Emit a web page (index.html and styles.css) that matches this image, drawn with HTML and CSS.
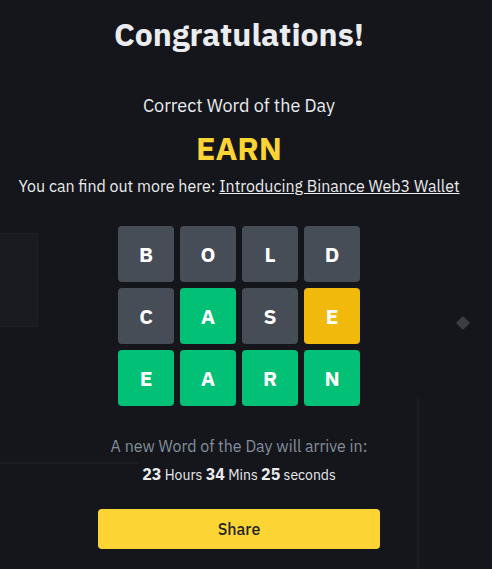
FILE: index.html
```html
<!DOCTYPE html>
<html lang="en">
<head>
<meta charset="utf-8">
<title>Congratulations</title>
<link rel="stylesheet" href="styles.css">
</head>
<body>
<div class="backdrop">
  <div class="deco deco-box"></div>
  <div class="deco deco-hline"></div>
  <div class="deco deco-vline"></div>
  <div class="deco deco-diamond"></div>
</div>
<main class="result">
  <h1 class="title">Congratulations!</h1>
  <p class="label">Correct Word of the Day</p>
  <p class="word">EARN</p>
  <p class="more">You can find out more here: <a class="more-link" href="#">Introducing Binance Web3 Wallet</a></p>
  <div class="board">
    <div class="tile tile-absent">B</div>
    <div class="tile tile-absent">O</div>
    <div class="tile tile-absent">L</div>
    <div class="tile tile-absent">D</div>
    <div class="tile tile-absent">C</div>
    <div class="tile tile-correct">A</div>
    <div class="tile tile-absent">S</div>
    <div class="tile tile-present">E</div>
    <div class="tile tile-correct">E</div>
    <div class="tile tile-correct">A</div>
    <div class="tile tile-correct">R</div>
    <div class="tile tile-correct">N</div>
  </div>
  <p class="next">A new Word of the Day will arrive in:</p>
  <p class="countdown"><b>23</b> Hours <b>34</b> Mins <b>25</b> seconds</p>
  <button class="share" type="button">Share</button>
</main>
</body>
</html>
```
FILE: styles.css
```css
html, body {
  margin: 0;
  padding: 0;
  height: 100%;
}
body {
  background: #15161b;
  font-family: "IBM Plex Sans", Inter, "Liberation Sans", sans-serif;
  color: #eaecef;
  position: relative;
  overflow: hidden;
}
.backdrop {
  position: absolute;
  inset: 0;
  pointer-events: none;
}
.deco {
  position: absolute;
}
.deco-box {
  left: -2px;
  top: 233px;
  width: 38px;
  height: 92px;
  background: #1a1b21;
  border: 1px solid #202127;
}
.deco-hline {
  left: 0;
  top: 462px;
  width: 138px;
  height: 2px;
  background: #1d1e24;
}
.deco-vline {
  left: 417px;
  top: 398px;
  width: 2px;
  height: 180px;
  background: #1c1d23;
}
.deco-diamond {
  left: 458px;
  top: 318px;
  width: 10px;
  height: 10px;
  background: #3b3d44;
  transform: rotate(45deg);
  border-radius: 1px;
}
.result {
  position: relative;
  width: 478px;
  display: flex;
  flex-direction: column;
  align-items: center;
  padding-top: 12px;
}
.title {
  margin: 0;
  font-size: 32px;
  line-height: 44px;
  font-weight: 700;
  color: #eaecef;
}
.label {
  margin: 38px 0 0;
  font-size: 18px;
  line-height: 24px;
}
.word {
  margin: 10px 0 0;
  font-size: 32px;
  line-height: 40px;
  font-weight: 700;
  color: #fcd535;
}
.more {
  margin: 6px 0 0;
  font-size: 16px;
  line-height: 24px;
}
.more-link {
  color: #eaecef;
  text-decoration: underline;
}
.board {
  margin-top: 28px;
  display: grid;
  grid-template-columns: repeat(4, 56px);
  grid-auto-rows: 56px;
  gap: 6px;
}
.tile {
  display: flex;
  align-items: center;
  justify-content: center;
  border-radius: 4px;
  font-size: 21px;
  font-weight: 700;
  color: #ffffff;
}
.tile-absent { background: #474d57; }
.tile-correct { background: #02c076; }
.tile-present { background: #f0b90b; }
.next {
  margin: 28px 0 0;
  font-size: 16px;
  line-height: 24px;
  color: #848e9c;
}
.countdown {
  margin: 4px 0 0;
  font-size: 14px;
  line-height: 24px;
  color: #eaecef;
}
.countdown b {
  font-size: 16px;
  font-weight: 700;
}
.share {
  margin-top: 22px;
  width: 282px;
  height: 40px;
  border: 0;
  border-radius: 4px;
  background: #fcd535;
  color: #1e2329;
  font-family: inherit;
  font-size: 16px;
  font-weight: 500;
}
```
